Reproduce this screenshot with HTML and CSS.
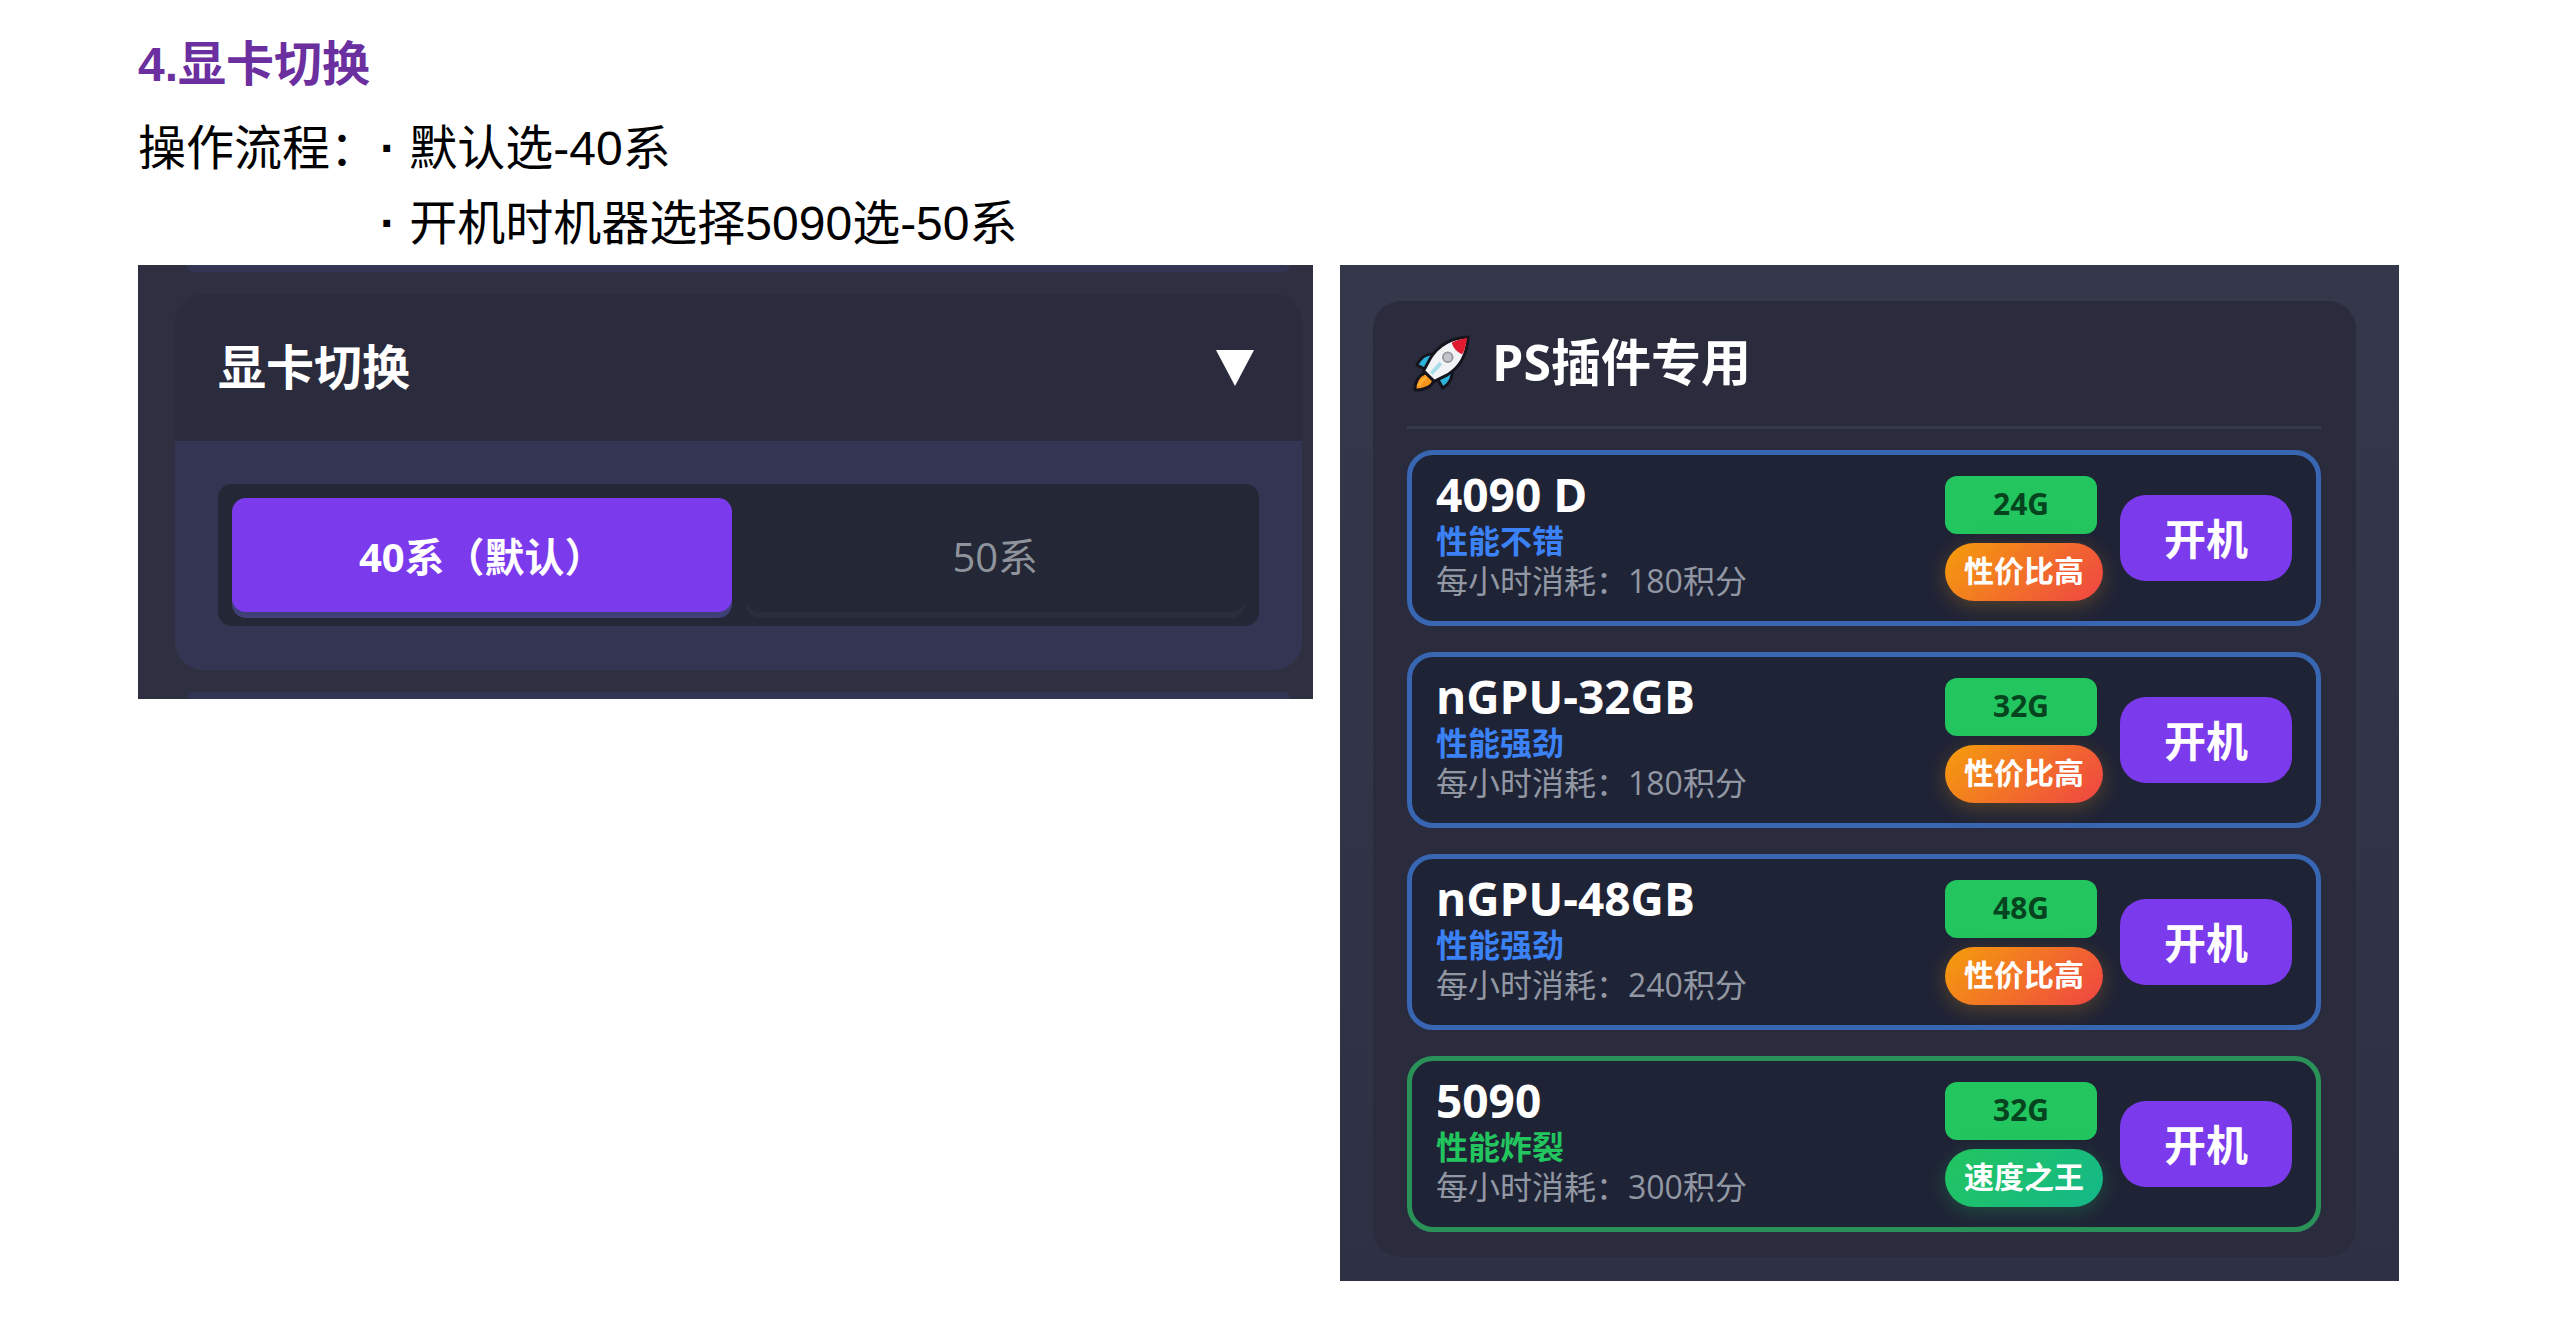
FILE: index.html
```html
<!DOCTYPE html>
<html lang="zh-CN">
<head>
  <meta charset="UTF-8">
  <meta name="viewport" content="width=device-width, initial-scale=1.0">
  <title>显卡切换</title>
  <link rel="stylesheet" href="styles.css">
</head>
<body>
  <h1>4.显卡切换</h1>
  <div class="steps">
    <span>操作流程：</span>
    <ul>
      <li>默认选-40系</li>
      <li>开机时机器选择5090选-50系</li>
    </ul>
  </div>

  <div class="panels">
    <!-- GPU switch -->
    <section class="panel switch-panel">
      <div class="edge edge-top"></div>
      <div class="switch-card">
        <button class="switch-header" type="button">
          <span>显卡切换</span>
          <svg class="arrow" viewBox="0 0 38 36"><path d="M0 0h38L19 36z" fill="#fff"/></svg>
        </button>
        <div class="switch-body">
          <div class="segment">
            <button type="button" class="active">40系（默认）</button>
            <button type="button">50系</button>
          </div>
        </div>
      </div>
      <div class="edge edge-bottom"></div>
    </section>

    <!-- Machine list -->
    <section class="panel machine-panel">
      <div class="machine-box">
        <h2>
          <svg class="rocket" viewBox="0 0 60 60">
            <g stroke="#15141c" stroke-width="3" stroke-linejoin="round">
              <path d="M14 39C7 42 3 48 3 57c9 0 17-3 20-10z" fill="#f7941d"/>
              <path d="M26 20C16 18 9 23 5 31l12 6z" fill="#2bb3dc"/>
              <path d="M41 34c2 9-2 16-9 21l-7-12z" fill="#2bb3dc"/>
              <path d="M58 2C41 3 27 11 19 24l-7 13 11 11 14-7C50 33 57 19 58 2z" fill="#f1f3f5"/>
            </g>
            <path d="M57 3c-6 1-11 2-16 5 2 6 6 10 11 12 3-5 4-11 5-17z" fill="#e01b2f"/>
            <circle cx="37" cy="23" r="5" fill="#c3c5ca" stroke="#94979f" stroke-width="2"/>
            <path d="M20 40l10-11" stroke="#a9dcea" stroke-width="4"/>
            <path d="M7 53c1-4 4-7 8-9" stroke="#ffb030" stroke-width="3" fill="none"/>
          </svg>
          <span>PS插件专用</span>
        </h2>

        <ul class="machine-list">
          <li class="machine">
            <div class="info">
              <h3>4090 D</h3>
              <p class="level">性能不错</p>
              <p class="cost">每小时消耗：180积分</p>
            </div>
            <div class="badges">
              <span class="memory">24G</span>
              <span class="tag">性价比高</span>
            </div>
            <button type="button" class="start">开机</button>
          </li>
          <li class="machine">
            <div class="info">
              <h3>nGPU-32GB</h3>
              <p class="level">性能强劲</p>
              <p class="cost">每小时消耗：180积分</p>
            </div>
            <div class="badges">
              <span class="memory">32G</span>
              <span class="tag">性价比高</span>
            </div>
            <button type="button" class="start">开机</button>
          </li>
          <li class="machine">
            <div class="info">
              <h3>nGPU-48GB</h3>
              <p class="level">性能强劲</p>
              <p class="cost">每小时消耗：240积分</p>
            </div>
            <div class="badges">
              <span class="memory">48G</span>
              <span class="tag">性价比高</span>
            </div>
            <button type="button" class="start">开机</button>
          </li>
          <li class="machine top">
            <div class="info">
              <h3>5090</h3>
              <p class="level">性能炸裂</p>
              <p class="cost">每小时消耗：300积分</p>
            </div>
            <div class="badges">
              <span class="memory">32G</span>
              <span class="tag">速度之王</span>
            </div>
            <button type="button" class="start">开机</button>
          </li>
        </ul>
      </div>
    </section>
  </div>
</body>
</html>
```
FILE: styles.css
```css
* {
  box-sizing: border-box;
}
body {
  margin: 0;
  padding: 33px 161px 36px 138px;
  background: #ffffff;
  color: #000000;
  font-family: "Liberation Sans", "Noto Sans CJK SC", sans-serif;
}
h1, h2, h3, p, ul {
  margin: 0;
  padding: 0;
}
ul {
  list-style: none;
}
button {
  border: none;
  padding: 0;
  font-family: inherit;
  cursor: pointer;
}

/* Heading and steps */
h1 {
  color: #6b2fa0;
  font-size: 48px;
  line-height: 64px;
}
.steps {
  display: flex;
  gap: 2px;
  margin-top: 14px;
  font-size: 48px;
  line-height: 75px;
}
.steps li::before {
  content: "· ";
  font-weight: bold;
}

.panels {
  display: grid;
  grid-template-columns: 1175fr 1059fr;
  gap: 27px;
  align-items: start;
  margin-top: 4px;
}
.panel {
  font-family: "Open Sans", "Noto Sans CJK SC", sans-serif;
  color: #ffffff;
}

/* GPU switch */
.switch-panel {
  padding: 0 11px 0 37px;
  background: #2e3041;
}
.edge {
  height: 7px;
  margin: 0 12px;
  background: #333653;
}
.edge-top {
  border-radius: 0 0 7px 7px;
}
.edge-bottom {
  border-radius: 7px 7px 0 0;
}
.switch-card {
  margin: 22px 0;
  border-radius: 28px;
  overflow: hidden;
  background: #343552;
}
.switch-header {
  display: flex;
  justify-content: space-between;
  align-items: center;
  width: 100%;
  height: 147px;
  padding: 0 48px 0 43px;
  background: #2a2c3d;
  color: #ffffff;
  font-size: 48px;
  font-weight: bold;
}
.switch-header span, h2 span {
  padding-bottom: 8px;
}
.arrow {
  width: 38px;
  height: 36px;
}
.switch-body {
  padding: 43px 43px 44px;
}
.segment {
  display: grid;
  grid-template-columns: 1fr 1fr;
  gap: 14px;
  padding: 14px;
  border-radius: 14px;
  background: #242736;
}
.segment button {
  height: 114px;
  border-radius: 14px;
  background: #242736;
  box-shadow: 0 6px 0 #2c2d3b;
  color: #8f949c;
  font-size: 40px;
}
.segment .active {
  background: #7c3aed;
  box-shadow: 0 6px 0 #3f4078;
  color: #ffffff;
  font-weight: bold;
}

/* Machine list */
.machine-panel {
  padding: 36px 43px 24px 33px;
  background: linear-gradient(#35384b, #2e3143);
}
.machine-box {
  padding: 0 35px 25px 34px;
  border-radius: 28px;
  background: #2a2c3d;
}
h2 {
  display: flex;
  align-items: center;
  gap: 22px;
  height: 128px;
  padding-left: 5px;
  border-bottom: 3px solid #373a4a;
  font-size: 50px;
}
.rocket {
  width: 58px;
  height: 58px;
}
.machine-list {
  display: grid;
  gap: 26px;
  margin-top: 21px;
}
.machine {
  display: flex;
  align-items: center;
  gap: 17px;
  height: 176px;
  padding: 0 24px;
  border: 5px solid #3866b3;
  border-radius: 26px;
  background: #1f2336;
}
.info {
  flex: 1;
  padding-bottom: 8px;
}
h3 {
  font-size: 46px;
  line-height: 52px;
}
.level {
  color: #3b82f6;
  font-size: 32px;
  font-weight: bold;
  line-height: 42px;
}
.cost {
  color: #9298a3;
  font-size: 32px;
  line-height: 38px;
}
.badges {
  display: grid;
  justify-items: start;
  gap: 9px;
}
.memory, .tag {
  height: 58px;
  font-size: 30px;
  font-weight: bold;
  line-height: 56px;
  text-align: center;
}
.memory {
  width: 152px;
  border-radius: 12px;
  background: #22c55e;
  color: #064420;
}
.tag {
  width: 158px;
  border-radius: 29px;
  background: linear-gradient(135deg, #f59e0b, #ef4444);
  box-shadow: 0 5px 20px rgba(245, 158, 11, 0.25);
}
.start {
  width: 172px;
  height: 86px;
  padding-bottom: 4px;
  border-radius: 26px;
  background: #7c3aed;
  color: #ffffff;
  font-size: 42px;
  font-weight: bold;
}
.top {
  border-color: #2a9158;
}
.top .level {
  color: #22c55e;
}
.top .tag {
  background: linear-gradient(135deg, #22c55e, #14b88a);
  box-shadow: 0 5px 20px rgba(34, 197, 94, 0.25);
}
```
